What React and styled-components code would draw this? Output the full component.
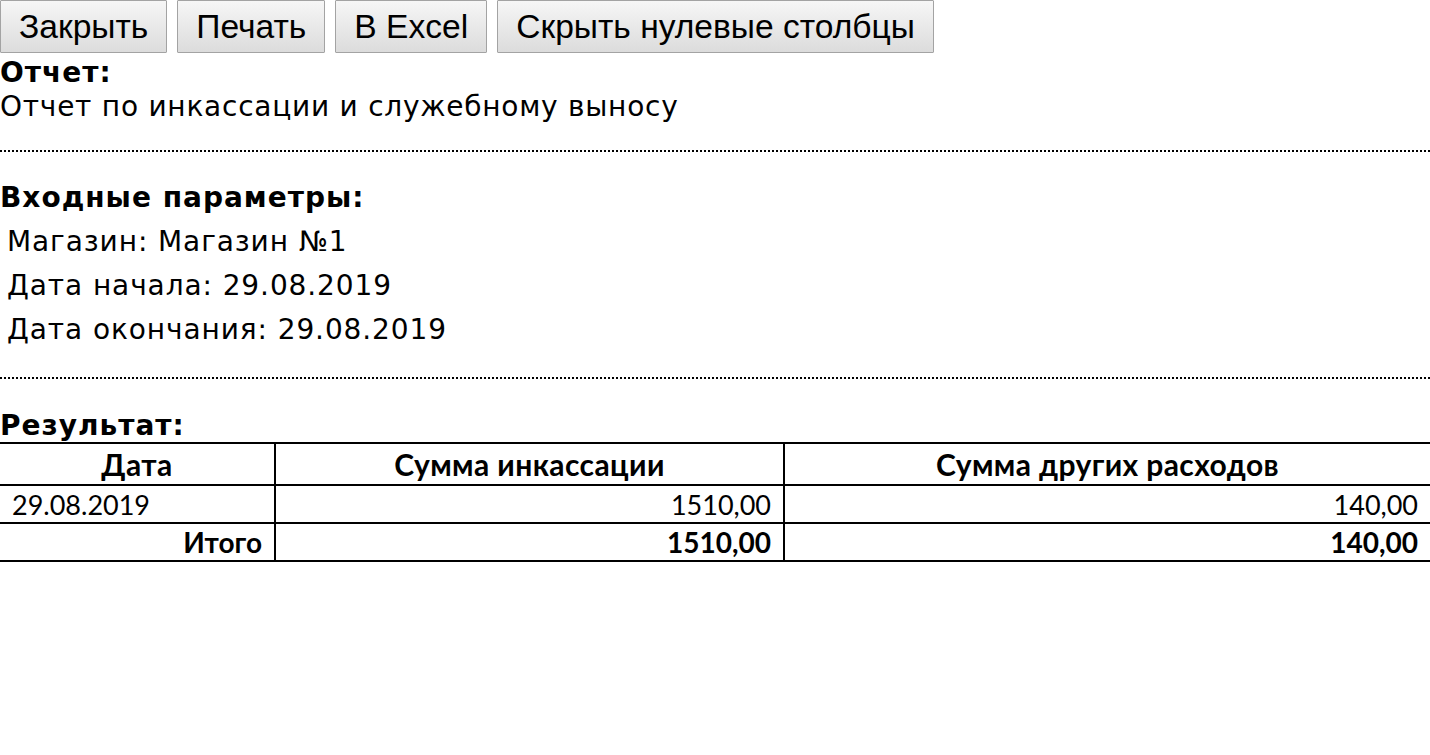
import React from "react";
import styled, { createGlobalStyle } from "styled-components";

const Global = createGlobalStyle`
  html, body { margin: 0; padding: 0; background: #fff; }
  body { font-family: "DejaVu Sans", Verdana, sans-serif; color: #000; }
`;

const Toolbar = styled.div`
  display: flex;
  gap: 10px;
  align-items: flex-start;
`;

const Button = styled.button`
  height: 53px;
  padding: 0 18px;
  margin: 0;
  border: 1px solid #a3a3a3;
  border-radius: 1px;
  background: linear-gradient(#f6f6f6, #dcdcdc);
  font-family: "Liberation Sans", Arial, sans-serif;
  font-size: 33.6px;
  color: #000;
  cursor: pointer;
`;

const Section = styled.div`
  padding-top: ${(p) => p.$top || 0}px;
`;

const Label = styled.div`
  font-size: 28px;
  font-weight: bold;
  letter-spacing: 1px;
  line-height: ${(p) => p.$lh || 34}px;
`;

const Text = styled.div`
  font-size: 28px;
  letter-spacing: 0.75px;
  line-height: 34px;
`;

const Divider = styled.hr`
  margin: ${(p) => p.$mt}px 0 0 0;
  border: none;
  border-top: 2px dotted #000;
  height: 0;
`;

const Params = styled.div`
  padding: 5px 0 0 7px;
`;

const Param = styled.div`
  font-size: 28px;
  letter-spacing: 0.9px;
  line-height: 44px;
`;

const Table = styled.table`
  width: 100%;
  border-collapse: collapse;
  table-layout: fixed;
  font-family: Lato, "Open Sans", sans-serif;
  font-size: 27px;
`;

const Cell = styled.td`
  border-top: 2px solid #000;
  border-bottom: 2px solid #000;
  border-left: 2px solid #000;
  padding: 0 12px;
  height: ${(p) => p.$h}px;
  text-align: ${(p) => p.$align || "left"};
  font-weight: ${(p) => (p.$bold ? "bold" : "normal")};
  font-size: ${(p) => (p.$bold ? "28px" : "27px")};
  white-space: nowrap;
  &:first-child { border-left: none; }
`;

const HeadCell = styled(Cell).attrs({ as: "th" })`
  font-size: 30px;
  letter-spacing: 0.4px;
  vertical-align: bottom;
  padding-bottom: 2px;
`;

export default function App() {
  return (
    <>
      <Global />
      <Toolbar>
        <Button>Закрыть</Button>
        <Button>Печать</Button>
        <Button>В Excel</Button>
        <Button>Скрыть нулевые столбцы</Button>
      </Toolbar>
      <Section $top={3}>
        <Label>Отчет:</Label>
        <Text>Отчет по инкассации и служебному выносу</Text>
      </Section>
      <Divider $mt={26} />
      <Section $top={29}>
        <Label>Входные параметры:</Label>
        <Params>
          <Param>Магазин: Магазин №1</Param>
          <Param>Дата начала: 29.08.2019</Param>
          <Param>Дата окончания: 29.08.2019</Param>
        </Params>
      </Section>
      <Divider $mt={25} />
      <Section $top={30}>
        <Label $lh={33}>Результат:</Label>
        <Table>
          <colgroup>
            <col style={{ width: 275 }} />
            <col style={{ width: 509 }} />
            <col />
          </colgroup>
          <thead>
            <tr>
              <HeadCell $h={38} $align="center" $bold>Дата</HeadCell>
              <HeadCell $h={38} $align="center" $bold>Сумма инкассации</HeadCell>
              <HeadCell $h={38} $align="center" $bold>Сумма других расходов</HeadCell>
            </tr>
          </thead>
          <tbody>
            <tr>
              <Cell $h={36}>29.08.2019</Cell>
              <Cell $h={36} $align="right">1510,00</Cell>
              <Cell $h={36} $align="right">140,00</Cell>
            </tr>
            <tr>
              <Cell $h={36} $align="right" $bold>Итого</Cell>
              <Cell $h={36} $align="right" $bold>1510,00</Cell>
              <Cell $h={36} $align="right" $bold>140,00</Cell>
            </tr>
          </tbody>
        </Table>
      </Section>
    </>
  );
}
